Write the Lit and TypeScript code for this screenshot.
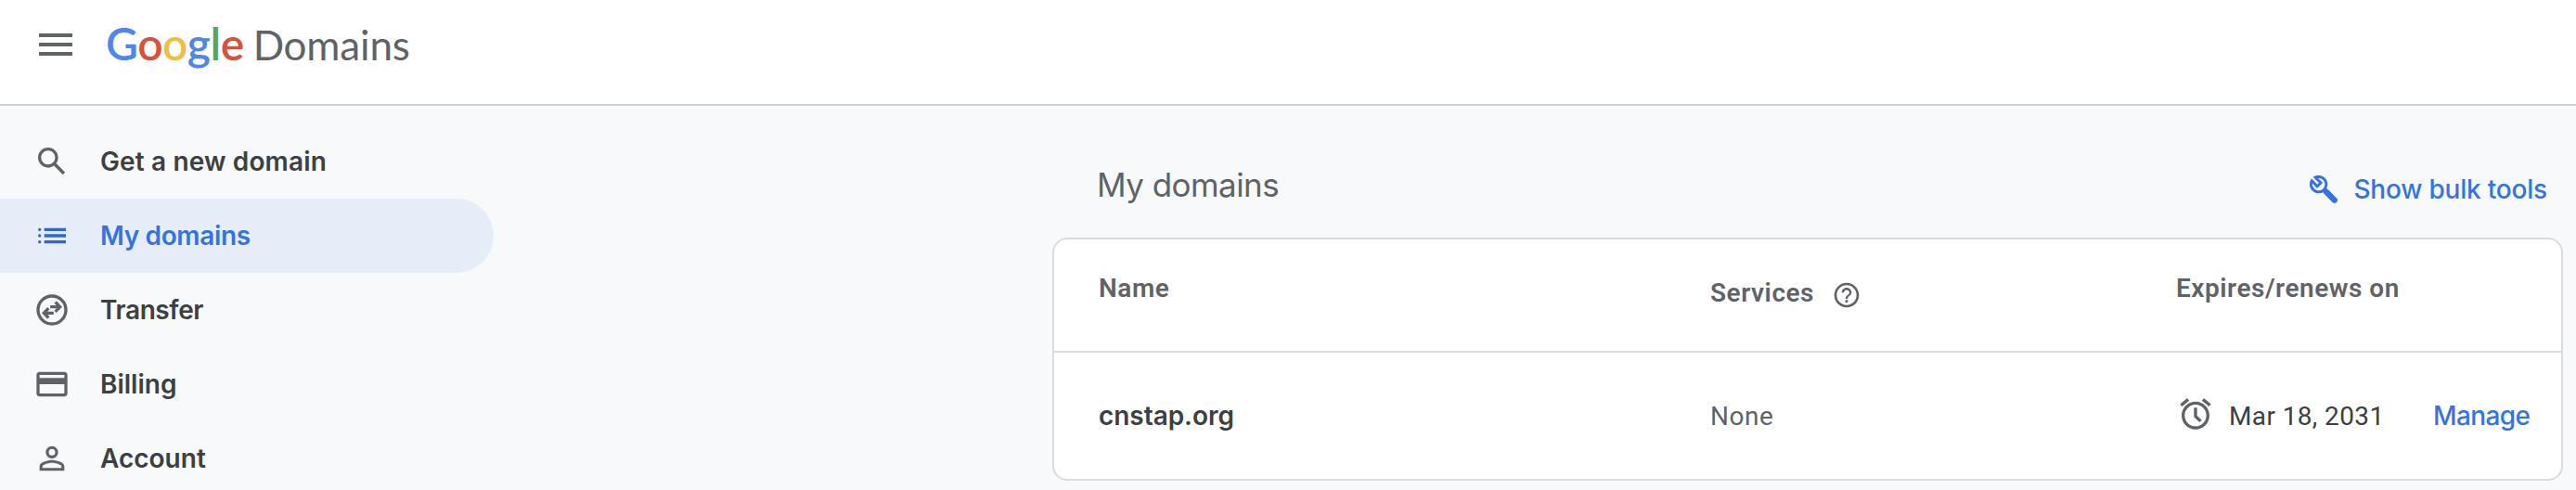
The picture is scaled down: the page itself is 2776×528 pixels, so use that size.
import { LitElement, html, css, svg } from 'lit';
import { customElement, property } from 'lit/decorators.js';
import { classMap } from 'lit/directives/class-map.js';

const icons: Record<string, unknown> = {
  menu: svg`<path d="M3 6h18v2H3zM3 11h18v2H3zM3 16h18v2H3z"/>`,
  search: svg`<path d="M20.49 19l-5.73-5.73C15.53 12.2 16 10.91 16 9.5 16 5.91 13.09 3 9.5 3S3 5.91 3 9.5 5.91 16 9.5 16c1.41 0 2.7-.47 3.77-1.24L19 20.49 20.49 19zM5 9.5C5 7.01 7.01 5 9.5 5S14 7.01 14 9.5 11.99 14 9.5 14 5 11.99 5 9.5z"/>`,
  list: svg`<circle cx="4" cy="8" r="1"/><circle cx="4" cy="12" r="1"/><circle cx="4" cy="16" r="1"/><path d="M7 7h14v2H7zM7 11h14v2H7zM7 15h14v2H7z"/>`,
  transfer: svg`<g fill="none" stroke="currentColor" stroke-width="2"><circle cx="12" cy="12" r="9"/><path d="M10.9 10h6.3M14.2 6.9l3 3.1-3 3.1M13.1 14H6.8M9.8 10.9l-3 3.1 3 3.1"/></g>`,
  card: svg`<path d="M20 4H4c-1.11 0-1.99.89-1.99 2L2 18c0 1.11.89 2 2 2h16c1.11 0 2-.89 2-2V6c0-1.11-.89-2-2-2zm0 14H4v-6h16v6zm0-10H4V6h16v2z"/>`,
  person: svg`<path d="M12 5.9a2.1 2.1 0 1 1 0 4.2 2.1 2.1 0 0 1 0-4.2m0 9c2.97 0 6.1 1.46 6.1 2.1v1.1H5.9V17c0-.64 3.13-2.1 6.1-2.1M12 4C9.79 4 8 5.79 8 8s1.79 4 4 4 4-1.79 4-4-1.79-4-4-4zm0 9c-2.67 0-8 1.34-8 4v3h16v-3c0-2.66-5.33-4-8-4z"/>`,
  help: svg`<path d="M11 18h2v-2h-2v2zm1-16C6.48 2 2 6.48 2 12s4.48 10 10 10 10-4.48 10-10S17.52 2 12 2zm0 18c-4.41 0-8-3.59-8-8s3.59-8 8-8 8 3.59 8 8-3.59 8-8 8zm0-14c-2.21 0-4 1.79-4 4h1.8c0-1.2 1-2.2 2.2-2.2s2.2 1 2.2 2.2c0 2-3.1 1.9-3.1 5h1.8c0-2.25 3.1-2.5 3.1-5 0-2.21-1.79-4-4-4z"/>`,
  alarm: svg`<path d="M22 5.72l-4.6-3.86-1.29 1.53 4.6 3.86L22 5.72zM7.88 3.39L6.6 1.86 2 5.71l1.29 1.53 4.59-3.85zM12 4c-4.97 0-9 4.03-9 9s4.02 9 9 9c4.97 0 9-4.03 9-9s-4.03-9-9-9zm0 16c-3.87 0-7-3.13-7-7s3.13-7 7-7 7 3.13 7 7-3.13 7-7 7z"/><path d="M12 8v5.6l3.3 3.1" fill="none" stroke="currentColor" stroke-width="2"/>`,
  wrench: svg`<g fill="none" stroke="currentColor" transform="scale(.8)"><path stroke-width="3" d="M2.4 5.8A8.2 8.2 0 1 0 6.2 2.2L12 8 8.1 11.8Z"/><path stroke-width="6.2" stroke-linecap="round" d="M17.4 17.3l9.4 9.4"/></g>`,
};

@customElement('g-icon')
class GIcon extends LitElement {
  @property() name = '';
  static styles = css`
    :host { display: block; flex: none; width: 40px; height: 40px; }
    .glyph { display: block; width: 100%; height: 100%; fill: currentColor; }
  `;
  render() {
    return html`<svg class="glyph" viewBox="0 0 24 24" aria-hidden="true">${icons[this.name]}</svg>`;
  }
}

@customElement('app-root')
class AppRoot extends LitElement {
  static styles = css`
    :host {
      display: flex; flex-direction: column; height: 528px; overflow: hidden;
      background: #f8f9fb; color: #3c4043;
      font: 500 28px/40px Inter, "Open Sans", sans-serif;
    }
    .header {
      display: flex; align-items: center; box-sizing: border-box; flex: none;
      height: 114px; padding: 0 36px 16px; gap: 30px;
      background: #fff; border-bottom: 2px solid #d0d1d3; color: #5f6368;
    }
    .menu { width: 48px; height: 48px; }
    .logo {
      display: flex; align-items: baseline; gap: 10px; white-space: nowrap;
      font-family: Lato, sans-serif; line-height: 58px; margin-top: -1px;
    }
    .brand { font-size: 48px; font-weight: 600; letter-spacing: -0.5px; }
    .product { font-size: 44px; font-weight: 400; letter-spacing: -.2px; }
    .b { color: #5086ec; } .r { color: #d65140; } .y { color: #f1be42; } .g { color: #58a55c; }
    .body { display: flex; justify-content: space-between; flex: 1; min-height: 0; }
    .nav { width: 532px; padding-top: 20px; font-weight: 600; }
    .item {
      display: flex; align-items: center; gap: 32px; height: 80px; box-sizing: border-box;
      padding-left: 36px; border-radius: 0 40px 40px 0;
    }
    .item g-icon { color: #5f6368; }
    .item:nth-child(1) { letter-spacing: .14px; }
    .item:nth-child(2) { letter-spacing: -.35px; }
    .item:nth-child(3) { letter-spacing: -.4px; }
    .active { background: #e7edf8; color: #3474e0; }
    .active g-icon { color: #2f66cf; }
    .main { width: 1628px; padding: 62px 14px 0 0; }
    .bar { display: flex; justify-content: space-between; padding: 0 17px 0 48px; height: 80px; }
    .title {
      margin: 0; font-size: 35px; line-height: 46px; font-weight: 400;
      letter-spacing: -.55px; color: #5f6368;
    }
    .bulk {
      display: flex; align-items: center; height: 56px; gap: 17px;
      color: #3474e0; letter-spacing: -.2px;
    }
    .bulk g-icon { width: 30px; height: 30px; }
    .table { border: 2px solid #dadbdf; border-radius: 16px; background: #fff; overflow: hidden; }
    .row {
      display: grid; grid-template-columns: 659px 502px 277px 1fr; align-items: center;
      padding-left: 48px; height: 136px; font-family: Roboto, sans-serif; letter-spacing: .5px;
      font-weight: 400;
    }
    .head {
      box-sizing: border-box; border-bottom: 2px solid #dadbdf;
      align-items: start; padding-top: 33px; height: 122px; font-weight: 600;
      letter-spacing: .52px; color: #5f6368;
    }
    .services { display: flex; gap: 19px; padding-top: 5px; }
    .services g-icon { width: 32px; height: 32px; padding-top: 6px; }
    .domain { font-family: Inter, sans-serif; font-weight: 600; letter-spacing: -.05px; }
    .muted { color: #5f6368; padding-top: 2px; }
    .date { display: flex; align-items: center; gap: 16px; letter-spacing: .38px; }
    .date span { padding-top: 2px; }
    .date g-icon { color: #5f6368; margin: -4px 0 0 1px; }
    .manage { font-family: Inter, sans-serif; font-weight: 500; color: #3474e0; letter-spacing: -.6px; }
  `;

  private items = [
    ['search', 'Get a new domain'],
    ['list', 'My domains'],
    ['transfer', 'Transfer'],
    ['card', 'Billing'],
    ['person', 'Account'],
  ];

  render() {
    return html`
      <header class="header">
        <g-icon class="menu" name="menu"></g-icon>
        <div class="logo">
          <span class="brand"><span class="b">G</span><span class="r">o</span><span class="y">o</span><span class="b">g</span><span class="g">l</span><span class="r">e</span></span>
          <span class="product">Domains</span>
        </div>
      </header>
      <div class="body">
        <nav class="nav">
          ${this.items.map(([icon, label]) => html`
            <div class=${classMap({ item: true, active: icon === 'list' })}>
              <g-icon name=${icon}></g-icon><span>${label}</span>
            </div>`)}
        </nav>
        <main class="main">
          <div class="bar">
            <h1 class="title">My domains</h1>
            <div class="bulk"><g-icon name="wrench"></g-icon><span>Show bulk tools</span></div>
          </div>
          <div class="table">
            <div class="row head">
              <div>Name</div>
              <div class="services"><span>Services</span><g-icon name="help"></g-icon></div>
              <div>Expires/renews on</div>
            </div>
            <div class="row">
              <div class="domain">cnstap.org</div>
              <div class="muted">None</div>
              <div class="date"><g-icon name="alarm"></g-icon><span>Mar 18, 2031</span></div>
              <div class="manage">Manage</div>
            </div>
          </div>
        </main>
      </div>
    `;
  }
}
